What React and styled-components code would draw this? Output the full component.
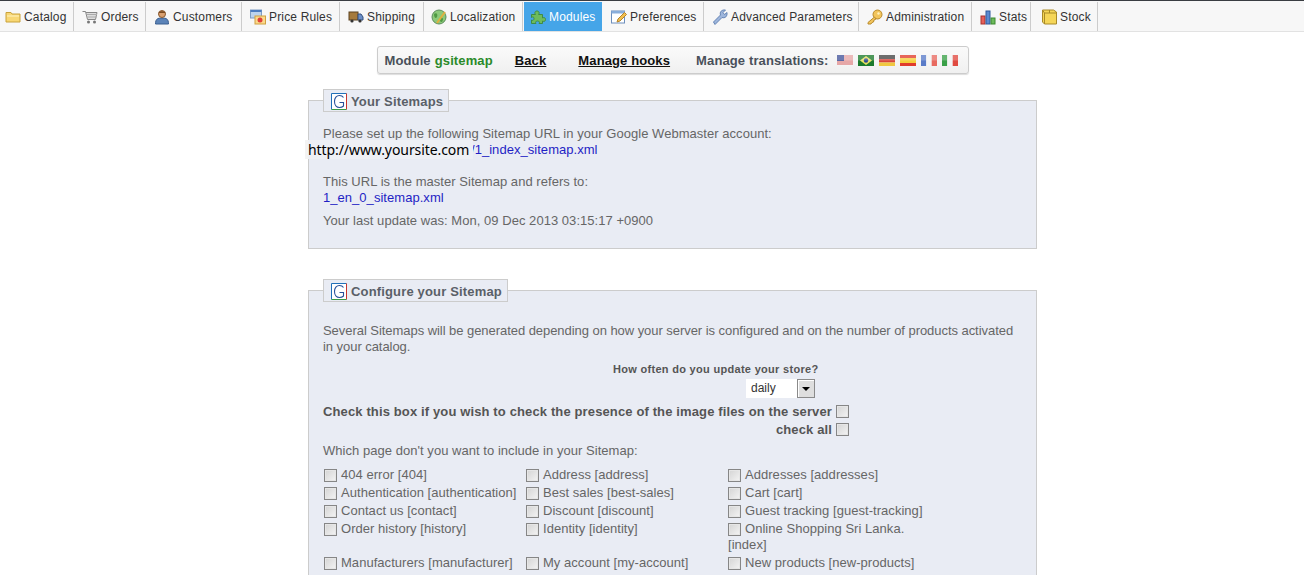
import React from "react";
import styled, { createGlobalStyle } from "styled-components";

const Global = createGlobalStyle`
  html, body { margin: 0; padding: 0; background: #fff; overflow: hidden; height: 575px; }
  body { font-family: "Liberation Sans", Arial, sans-serif; font-size: 13px; color: #666; }
`;

const TabBar = styled.nav`
  display: flex;
  height: 29px;
  padding-top: 1px;
  background: #f7f7f7;
  border-top: 1px solid #3a3d42;
  border-bottom: 1px solid #e2e2e2;
`;
const Tab = styled.a`
  display: flex;
  align-items: center;
  gap: ${p => p.$gap ?? 3}px;
  box-sizing: border-box;
  width: ${p => p.$w}px;
  margin-left: ${p => p.$ml ?? 0}px;
  padding-left: ${p => p.$pl ?? 5}px;
  font-size: 12px;
  letter-spacing: 0.16px;
  color: ${p => (p.$active ? "#fff" : "#333")};
  background: ${p => (p.$active ? "#45a5e8" : "transparent")};
  border-right: ${p => (p.$active ? "0" : "1px solid #ccc")};
  white-space: nowrap;
`;

const Main = styled.main`
  display: flex;
  flex-direction: column;
  align-items: center;
  padding-left: 41px;
  padding-top: 14px;
`;
const Toolbar = styled.div`
  box-sizing: border-box;
  width: 592px;
  height: 28px;
  display: flex;
  align-items: center;
  padding-left: 7px;
  font-size: 13px;
  font-weight: bold;
  letter-spacing: 0.12px;
  color: #49505a;
  border: 1px solid #ccc;
  border-radius: 3px;
  background: linear-gradient(#fafafa, #f0f0f0);
  box-shadow: 0 1px 1px #ddd;
`;
const Green = styled.span` color: #2a8a2a; margin-left: 4px; `;
const ToolLink = styled.a`
  color: #111;
  text-decoration: underline;
  margin-left: ${p => p.$ml}px;
`;
const Translations = styled.span` margin-left: 26px; `;
const Flags = styled.span`
  display: flex;
  gap: 3px;
  margin-left: 8px;
`;

const Fieldset = styled.fieldset`
  box-sizing: border-box;
  width: 729px;
  height: ${p => p.$h}px;
  margin: ${p => p.$mt}px 0 0;
  padding: 10px 14px 0;
  background: #e9ecf4;
  border: 1px solid #ccc;
  flex-shrink: 0;
`;
const Legend = styled.legend`
  display: flex;
  align-items: center;
  gap: 4px;
  box-sizing: border-box;
  height: 23px;
  padding: 1px 5px 0 7px;
  font-size: 13px;
  font-weight: bold;
  letter-spacing: 0.16px;
  color: #5a6068;
  background: #e9ecf4;
  border: 1px solid #ccc;
`;
const Para = styled.p`
  margin: ${p => p.$mt ?? 0}px 0 0;
  max-width: ${p => p.$max ?? 699}px;
  line-height: 16px;
  font-size: 13px;
  letter-spacing: ${p => p.$ls ?? 0.04}px;
  color: #666;
`;
const Blue = styled.a` color: #1f1fc4; `;
const UrlLine = styled.span`
  position: relative;
  display: block;
  padding-left: 148px;
`;
const UrlPatch = styled.span`
  position: absolute;
  left: -18px;
  top: -2px;
  height: 19px;
  width: 168px;
  padding-left: 3px;
  box-sizing: border-box;
  font-family: "Noto Sans", "Open Sans", sans-serif;
  font-size: 14px;
  line-height: 19px;
  letter-spacing: -0.08px;
  color: #000;
  background: linear-gradient(90deg, #f3f3f3 0, #f3f3f3 3px, #eef0f5 3px);
  white-space: nowrap;
`;
const Question = styled.div`
  margin-top: 7px;
  padding-left: 290px;
  font-size: 11px;
  font-weight: bold;
  line-height: 14px;
  letter-spacing: 0.3px;
  color: #555;
`;
const SelectRow = styled.div`
  display: flex;
  margin: 3px 0 0 423px;
  height: 19px;
`;
const SelectValue = styled.div`
  width: 51px;
  height: 19px;
  box-sizing: border-box;
  padding-left: 5px;
  font-size: 12px;
  line-height: 19px;
  color: #333;
  background: #fff;
`;
const SelectButton = styled.div`
  width: 18px;
  height: 19px;
  box-sizing: border-box;
  display: flex;
  align-items: center;
  justify-content: center;
  background: #dedede;
  border: 1px solid #8a8a8a;
  box-shadow: inset 1px 1px 0 #fff;
  &::after {
    content: "";
    border-left: 4px solid transparent;
    border-right: 4px solid transparent;
    border-top: 4px solid #000;
  }
`;
const BoxLine = styled.div`
  display: flex;
  align-items: center;
  justify-content: flex-end;
  width: 526px;
  height: 14px;
  margin-top: ${p => p.$mt}px;
  gap: 4px;
  font-size: 13px;
  font-weight: bold;
  letter-spacing: 0.13px;
  color: #555;
  white-space: nowrap;
`;
const Box = styled.span`
  display: inline-block;
  flex-shrink: 0;
  box-sizing: border-box;
  width: 13px;
  height: 13px;
  border: 1px solid #868686;
  background: linear-gradient(135deg, #d4d4d4, #f4f4f4);
  box-shadow: inset 0 0 0 1px #e6e6e6;
`;
const Pages = styled.div`
  display: grid;
  grid-template-columns: 202px 202px 202px;
  margin-top: 8px;
`;
const PageItem = styled.label`
  display: block;
  width: 200px;
  padding: 0 0 2px 1px;
  line-height: 16px;
  font-size: 13px;
  letter-spacing: 0.04px;
  color: #666;
  & > span:first-child {
    vertical-align: -3px;
    margin-right: 4px;
  }
`;

const Ic = ({ children }) => (
  <svg width="16" height="16" viewBox="0 0 16 16" style={{ flexShrink: 0 }}>{children}</svg>
);

const Icons = {
  catalog: <Ic><path d="M1 3.500h5l1 1.500h8v8H1z" fill="#f8d774" stroke="#c9a23a" /><path d="M2 7h12" stroke="#fff3c0" /></Ic>,
  orders: <Ic><path d="M.5 2.500h3l2 8h8l1.500-7H4" fill="#ddd" stroke="#888" /><path d="M5 5.500h10M5.500 8h9" stroke="#aaa" /><circle cx="6.500" cy="13" r="1.500" fill="#777" /><circle cx="12.500" cy="13" r="1.500" fill="#777" /></Ic>,
  customers: <Ic><path d="M1.500 15c0-5 2-6 6.500-6s6.500 1 6.500 6z" fill="#5b83b8" stroke="#3b5f90" /><circle cx="8" cy="5" r="3.500" fill="#d9a070" stroke="#8a5a30" /><path d="M4.500 4C5 1.500 11 1.500 11.500 4z" fill="#7a4a20" /></Ic>,
  price: <Ic><rect x="0.500" y="1" width="11" height="8" fill="#bcd3ee" stroke="#7d9cc4" /><rect x="0.500" y="1" width="11" height="2" fill="#4d7cc0" /><rect x="5" y="7" width="10.500" height="8" fill="#fbd98a" stroke="#d0a040" /><circle cx="10" cy="11" r="2.500" fill="#e0403a" /></Ic>,
  shipping: <Ic><rect x="1" y="3" width="9" height="8" fill="#a57a3c" stroke="#5c4320" /><path d="M10 5h3l2 3v3h-5z" fill="#6b8fc8" stroke="#36507c" /><circle cx="4" cy="12" r="1.600" fill="#333" /><circle cx="12" cy="12" r="1.600" fill="#333" /></Ic>,
  loc: <Ic><circle cx="8" cy="8" r="7" fill="#8cc97a" stroke="#5c8c5c" /><path d="M3 5c3-2 4 1 3 3s-3 1-3-3zM9 9c3-1 4 1 2 4-2 0-3-2-2-4z" fill="#4f9a44" /><path d="M6 14L14 3" stroke="#e0b040" strokeWidth="2" /></Ic>,
  modules: <Ic><path d="M1.500 5.500H5.500c-1-1-1-3.500 1.500-3.500s2.500 2.500 1.500 3.500h4v3.500c1-.8 3-.6 3 1.500s-2 2.300-3 1.500v2.500H9c.8-1 .5-2.500-1.500-2.500s-2.300 1.500-1.500 2.500H1.500v-3.500c1 .8 2.500.3 2.500-1.500S2.500 7.500 1.500 8.500z" fill="#6dbb5c" stroke="#3f8c45" /></Ic>,
  prefs: <Ic><rect x="0.500" y="2" width="13" height="12" fill="#fff" stroke="#6d8ebc" /><rect x="0.500" y="2" width="13" height="2.500" fill="#8aaedb" /><path d="M6 13l1-3 6.500-6.500 2 2L9 12z" fill="#f3c04f" stroke="#b5842a" /></Ic>,
  advanced: <Ic><path d="M1.500 13l7-7c-1-3 1-5.500 5-5l-2.500 2.500 1.500 2L15 3.500c.5 4-2 6-5 5l-7 7z" fill="#9eb6dc" stroke="#6484b5" /></Ic>,
  admin: <Ic><circle cx="10.500" cy="5.500" r="4.500" fill="#f2c55c" stroke="#b98a2c" /><circle cx="11.500" cy="4.500" r="1.200" fill="#fff2c0" /><path d="M7.500 8L1 13.500V15h3l1-1.500 1.500-.5.500-2 2-1z" fill="#f2c55c" stroke="#b98a2c" /></Ic>,
  stats: <Ic><rect x="1" y="7" width="4" height="8" fill="#e6605a" stroke="#a8322e" /><rect x="6" y="2" width="4" height="13" fill="#5a8ad0" stroke="#2e5a9e" /><rect x="11" y="9" width="4" height="6" fill="#6cba5a" stroke="#3c8a30" /></Ic>,
  stock: <Ic><path d="M1.500 1h11l3 2v12H3.500l-2-2z" fill="#f5d658" stroke="#a88a28" /><path d="M1.500 1l2 3h12M3.500 4v11M8.500 1v3" stroke="#a88a28" fill="none" /></Ic>,
};

const Flag = ({ children }) => (
  <svg width="16" height="11" viewBox="0 0 16 11" style={{ marginRight: 2 }}>
    {children}
    <rect width="16" height="5.500" fill="#fff" opacity="0.22" />
  </svg>
);
const flags = [
  <Flag key="us"><rect width="16" height="11" fill="#f4f4f4" /><path d="M0 1h16M0 3h16M0 5h16M0 7h16M0 9h16" stroke="#d85a5a" /><rect width="7" height="6" fill="#44559a" /></Flag>,
  <Flag key="br"><rect width="16" height="11" fill="#1b7a2c" /><path d="M8 1l6 4.500-6 4.500-6-4.500z" fill="#e8e060" /><circle cx="8" cy="5.500" r="2.200" fill="#2a4a90" /></Flag>,
  <Flag key="de"><rect width="16" height="4" fill="#444" /><rect y="4" width="16" height="3.500" fill="#d8453a" /><rect y="7.500" width="16" height="3.500" fill="#f0c840" /></Flag>,
  <Flag key="es"><rect width="16" height="11" fill="#e03c2c" /><rect y="3" width="16" height="5" fill="#f5cf3a" /></Flag>,
  <Flag key="fr"><rect width="5.300" height="11" fill="#5a7cc8" /><rect x="5.300" width="5.400" height="11" fill="#f4f4f4" /><rect x="10.700" width="5.300" height="11" fill="#e86a60" /></Flag>,
  <Flag key="it"><rect width="5.300" height="11" fill="#3aa048" /><rect x="5.300" width="5.400" height="11" fill="#f4f4f4" /><rect x="10.700" width="5.300" height="11" fill="#e04a40" /></Flag>,
];

const GLogo = () => (
  <svg width="16" height="17" viewBox="0 0 16 17" style={{ flexShrink: 0 }}>
    <rect x="0.500" y="0.500" width="15" height="16" fill="#fff" />
    <path d="M0.500 16.500V.5H15.500" fill="none" stroke="#1f6fb8" />
    <path d="M15.500 .5V16.500" stroke="#c8342c" />
    <path d="M0.500 16.500H15.500" stroke="#3a9a44" />
    <path d="M12.500 4.500C11.500 3 10 2.500 8.500 2.500 5.500 2.500 3.500 5 3.500 8.500s2 6 5 6c1.500 0 3-.5 4-1.500V9.500H8.500" fill="none" stroke="#27509a" strokeWidth="1.100" />
  </svg>
);

const tabs = [
  ["Catalog", "catalog", 74, 5],
  ["Orders", "orders", 72, 8],
  ["Customers", "customers", 96, 8],
  ["Price Rules", "price", 98, 8],
  ["Shipping", "shipping", 84, 8],
  ["Localization", "loc", 99, 7],
];
const tabs2 = [
  ["Preferences", "prefs", 102, 9],
  ["Advanced Parameters", "advanced", 155, 8],
  ["Administration", "admin", 113, 8],
  ["Stats", "stats", 59, 8],
  ["Stock", "stock", 67, 10],
];

const pages = [
  "404 error [404]", "Address [address]", "Addresses [addresses]",
  "Authentication [authentication]", "Best sales [best-sales]", "Cart [cart]",
  "Contact us [contact]", "Discount [discount]", "Guest tracking [guest-tracking]",
  "Order history [history]", "Identity [identity]", "Online Shopping Sri Lanka. [index]",
  "Manufacturers [manufacturer]", "My account [my-account]", "New products [new-products]",
];

export default function App() {
  return (
    <>
      <Global />
      <TabBar>
        {tabs.map(([t, i, w, pl]) => (
          <Tab key={t} $w={w} $pl={pl}>{Icons[i]}{t}</Tab>
        ))}
        <Tab $w={78} $ml={1} $pl={6} $active>{Icons.modules}Modules</Tab>
        {tabs2.map(([t, i, w, pl]) => (
          <Tab key={t} $w={w} $pl={pl}>{Icons[i]}{t}</Tab>
        ))}
      </TabBar>
      <Main>
        <Toolbar>
          <span>Module</span><Green>gsitemap</Green>
          <ToolLink $ml={22}>Back</ToolLink>
          <ToolLink $ml={32}>Manage hooks</ToolLink>
          <Translations>Manage translations:</Translations>
          <Flags>{flags}</Flags>
        </Toolbar>
        <Fieldset $h={160} $mt={15}>
          <Legend><GLogo />Your Sitemaps</Legend>
          <Para $mt={4}>Please set up the following Sitemap URL in your Google Webmaster account:</Para>
          <Para as="div">
            <UrlLine>
              <UrlPatch>http://www.yoursite.com</UrlPatch>
              <Blue>/1_index_sitemap.xml</Blue>
            </UrlLine>
          </Para>
          <Para $mt={16}>This URL is the master Sitemap and refers to:</Para>
          <Para><Blue>1_en_0_sitemap.xml</Blue></Para>
          <Para $mt={7}>Your last update was: Mon, 09 Dec 2013 03:15:17 +0900</Para>
        </Fieldset>
        <Fieldset $h={320} $mt={30}>
          <Legend><GLogo />Configure your Sitemap</Legend>
          <Para $mt={11} $ls={-0.05} $max={692}>Several Sitemaps will be generated depending on how your server is configured and on the number of products activated in your catalog.</Para>
          <Question>How often do you update your store?</Question>
          <SelectRow><SelectValue>daily</SelectValue><SelectButton /></SelectRow>
          <BoxLine $mt={6}>Check this box if you wish to check the presence of the image files on the server<Box /></BoxLine>
          <BoxLine $mt={4}>check all<Box /></BoxLine>
          <Para $mt={7}>Which page don't you want to include in your Sitemap:</Para>
          <Pages>
            {pages.map(t => (
              <PageItem key={t}><Box />{t}</PageItem>
            ))}
          </Pages>
        </Fieldset>
      </Main>
    </>
  );
}
